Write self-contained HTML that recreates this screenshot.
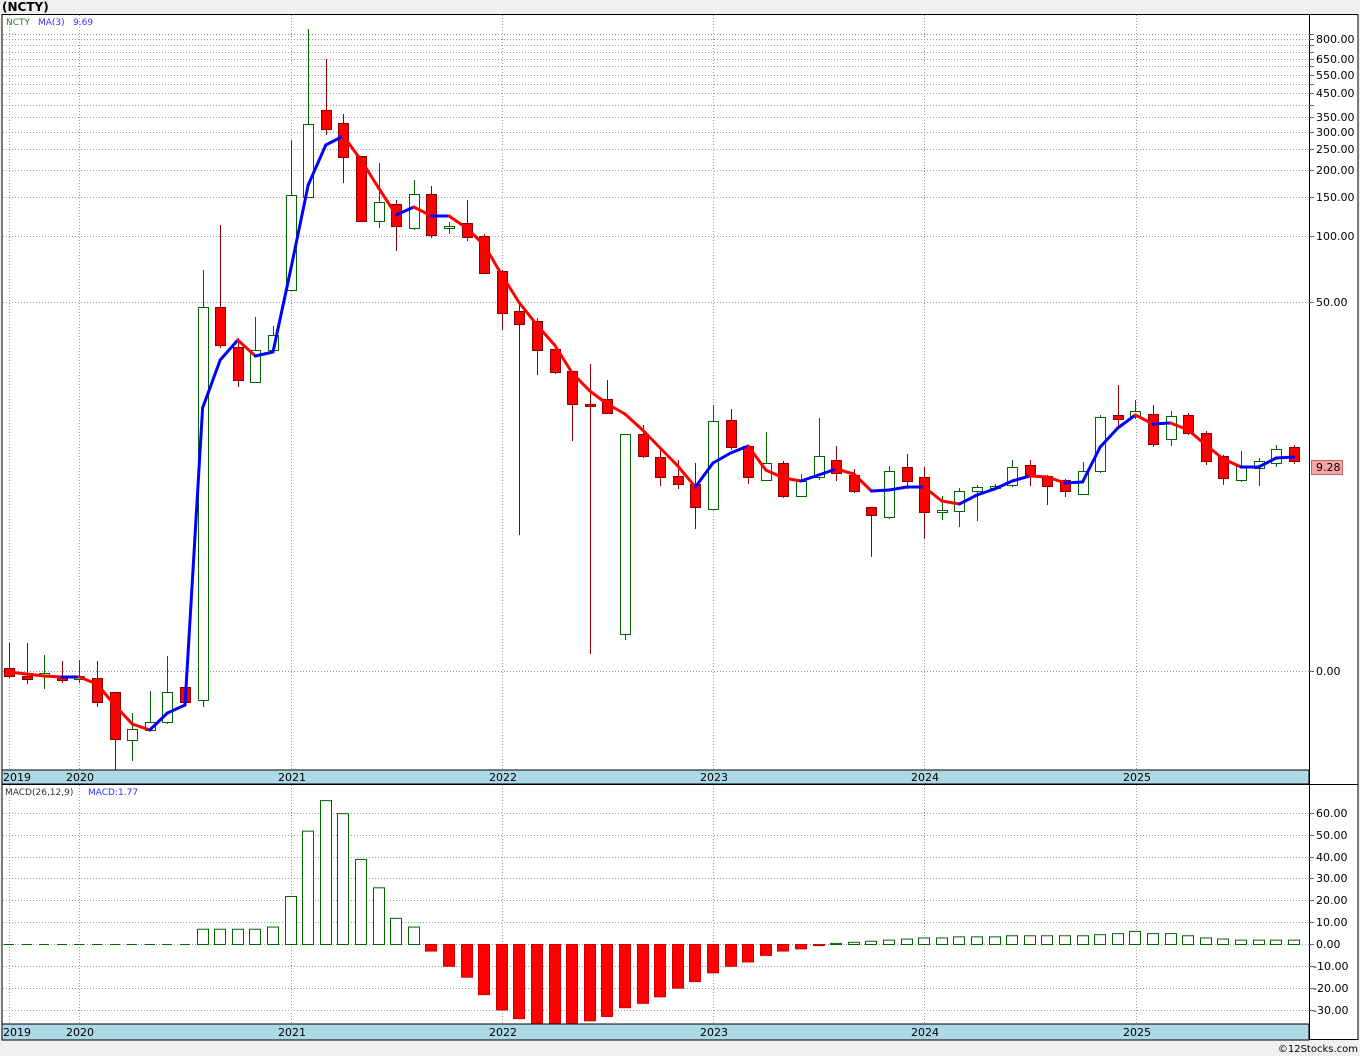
<!DOCTYPE html>
<html><head><meta charset="utf-8"><style>
html,body{margin:0;padding:0;background:#f0f0f0;}
svg{display:block;font-family:"DejaVu Sans","Liberation Sans",sans-serif;}
</style></head><body>
<svg id="s" width="1360" height="1056" xmlns="http://www.w3.org/2000/svg">
<defs><clipPath id="mc"><rect x="2" y="785" width="1307" height="239"/></clipPath></defs>
<rect x="0" y="0" width="1360" height="1056" fill="#f0f0f0"/>
<text x="2" y="11" font-size="12" font-weight="bold" fill="#000">(NCTY)</text>
<rect x="2" y="14.5" width="1356" height="1025" fill="#fff" stroke="#000"/>
<g id="grid" stroke="#999" stroke-dasharray="1,2" stroke-width="1"></g>
<line x1="1309.5" y1="14" x2="1309.5" y2="1040" stroke="#000"/>
<line x1="2" y1="784.5" x2="1358" y2="784.5" stroke="#000"/>
<g id="ticks" stroke="#666"></g>
<g id="candles"></g>
<g id="ma" fill="none" stroke-width="3" stroke-linecap="round"></g>
<g id="macd" clip-path="url(#mc)"></g>
<rect x="2" y="770" width="1307" height="14" fill="#add8e6" stroke="#000"/>
<rect x="2" y="1024" width="1307" height="16" fill="#add8e6" stroke="#000"/>
<g font-size="11" fill="#000">
<text x="1316" y="43">800.00</text><text x="1316" y="63">650.00</text><text x="1316" y="79">550.00</text><text x="1316" y="97">450.00</text><text x="1316" y="121">350.00</text><text x="1316" y="136">300.00</text><text x="1316" y="153">250.00</text><text x="1316" y="174">200.00</text><text x="1316" y="201">150.00</text><text x="1316" y="240">100.00</text><text x="1316" y="306">50.00</text><text x="1316" y="675">0.00</text>
<text x="1316" y="817">60.00</text><text x="1316" y="839">50.00</text><text x="1316" y="861">40.00</text><text x="1316" y="882">30.00</text><text x="1316" y="904">20.00</text><text x="1316" y="926">10.00</text><text x="1316" y="948">0.00</text><text x="1313" y="970">-10.00</text><text x="1313" y="992">-20.00</text><text x="1313" y="1014">-30.00</text>
<text x="3" y="781">2019</text><text x="66" y="781">2020</text><text x="278" y="781">2021</text><text x="489" y="781">2022</text><text x="700" y="781">2023</text><text x="911" y="781">2024</text><text x="1123" y="781">2025</text>
<text x="3" y="1036">2019</text><text x="66" y="1036">2020</text><text x="278" y="1036">2021</text><text x="489" y="1036">2022</text><text x="700" y="1036">2023</text><text x="911" y="1036">2024</text><text x="1123" y="1036">2025</text>
</g>
<text x="6" y="25" font-size="9" fill="#2a7a2a">NCTY</text><text x="38" y="25" font-size="9" fill="#3333ff">MA(3)</text><text x="73" y="25" font-size="9" fill="#3333ff">9.69</text>
<text x="5" y="795" font-size="9" fill="#333">MACD(26,12,9)</text><text x="88" y="795" font-size="9" fill="#3333ff">MACD:1.77</text>
<rect x="1311.5" y="460.5" width="31" height="14" fill="#f4a7a7" stroke="#c66"/>
<text x="1316" y="471" font-size="11" fill="#000">9.28</text>
<text x="1358" y="1052" font-size="10" fill="#000" text-anchor="end">©12Stocks.com</text>
</svg>
<script>
var NS="http://www.w3.org/2000/svg";
function el(p,t,a){var e=document.createElementNS(NS,t);for(var k in a)e.setAttribute(k,a[k]);document.getElementById(p).appendChild(e);return e;}
[34,39,45,52,59,66,75,84,93,105,117,132,149,170,197,236,302,671,813,835,857,878,900,922,944,966,988,1010].forEach(function(y){el("grid","line",{x1:3,x2:1309,y1:y+.5,y2:y+.5});el("ticks","line",{x1:1309,x2:1314,y1:y+.5,y2:y+.5});});
[9,79,291,502,713,924,1136].forEach(function(x){el("grid","line",{x1:x+.5,x2:x+.5,y1:15,y2:770});el("grid","line",{x1:x+.5,x2:x+.5,y1:785,y2:1024});});
var C=[[668,676,643,678,1],[676,679,643,684,1],[676,673,655,689,0],[676,680,661,683,1],[679,676,660,683,0],[678,702,661,707,1],[692,739,692,770,1],[740,729,713,761,0],[730,722,691,731,0],[722,692,656,724,0],[687,702,680,706,1],[700,307,270,707,0],[307,345,225,348,1],[347,380,338,387,1],[382,350,317,383,0],[350,335,326,353,0],[290,195,140,290,0],[197,124,29,197,0],[110,129,59,135,1],[123,157,114,183,1],[156,221,156,222,1],[221,202,163,228,0],[204,226,200,251,1],[228,194,180,230,0],[194,235,186,238,1],[228,226,222,234,0],[223,237,200,241,1],[236,273,234,274,1],[271,313,270,330,1],[311,324,305,535,1],[321,350,318,375,1],[349,372,349,374,1],[371,404,371,441,1],[404,405,364,654,1],[399,413,380,413,1],[634,434,434,640,0],[434,456,425,458,1],[457,477,450,486,1],[476,484,460,489,1],[484,507,463,529,1],[509,421,405,509,0],[420,447,409,450,1],[446,477,445,484,1],[480,463,432,480,0],[463,496,461,498,1],[496,481,474,497,0],[477,456,418,480,0],[460,473,446,481,1],[475,491,469,493,1],[507,515,507,557,1],[517,471,466,519,0],[467,481,454,489,1],[477,512,467,539,1],[512,510,496,520,0],[511,491,488,527,0],[491,487,485,521,0],[488,486,484,490,0],[485,467,460,487,0],[465,476,460,486,1],[476,486,475,505,1],[480,491,479,497,1],[494,471,462,495,0],[471,417,415,473,0],[415,419,385,427,1],[416,411,400,419,0],[414,444,405,447,1],[439,416,411,446,0],[415,433,413,435,1],[433,461,431,465,1],[456,478,455,485,1],[480,466,451,482,0],[468,461,458,486,0],[463,449,445,467,0],[447,461,445,464,1]];
C.forEach(function(c,i){var x=Math.round(9+17.6*i);var t=Math.min(c[0],c[1]),b=Math.max(c[0],c[1]);if(b-t<2)b=t+2;
var col=c[4]?"#8b0000":"#006400";
el("candles","line",{x1:x+.5,x2:x+.5,y1:c[2],y2:c[3],stroke:col});
el("candles","rect",{x:x-5+.5,y:t+.5,width:10,height:b-t,fill:c[4]?"#f00":"#fff",stroke:col});});
var M=[672,674,676,677,677,684,705,724,730,713,705,408,360,340,356,352,270,185,145,136,160,188,215,207,216,216,228,245,275,303,325,345,373,391,404,414,430,448,466,487,463,453,446,470,478,481,475,469,474,491,490,487,487,501,504,495,489,481,476,477,483,482,447,428,415,424,423,430,445,459,467,467,458,457];
for(var i=1;i<M.length;i++){var x0=9+17.6*(i-1),x1=9+17.6*i;el("ma","line",{x1:x0,y1:M[i-1],x2:x1,y2:M[i],stroke:M[i]<=M[i-1]?"#00f":"#f00"});}
var D=[0,0,0,0,0,0,0,0,0,0,0,7,7,7,7,8,22,52,66,60,39,26,12,8,-3,-10,-15,-23,-30,-34,-37,-38,-38,-35,-33,-29,-27,-24,-20,-17,-13,-10,-8,-5,-3,-2,-0.5,0.5,1,1.5,2,2.5,3,3,3.5,3.5,3.5,4,4,4,4,4,4.5,5,6,5,5,4,3,2.5,2,2,2,2];
D.forEach(function(v,i){var x=Math.round(9+17.6*i);var y0=944,y=944-v*2.18;var t=Math.min(y0,y),h=Math.abs(y-y0);
if(h<1){el("macd","line",{x1:x-5,x2:x+5,y1:944.5,y2:944.5,stroke:"#006400"});return;}
el("macd","rect",{x:x-6+.5,y:t+.5,width:11,height:h,fill:v<0?"#f00":"#fff",stroke:v<0?"#c00":"#006400"});});
</script>
</body></html>
